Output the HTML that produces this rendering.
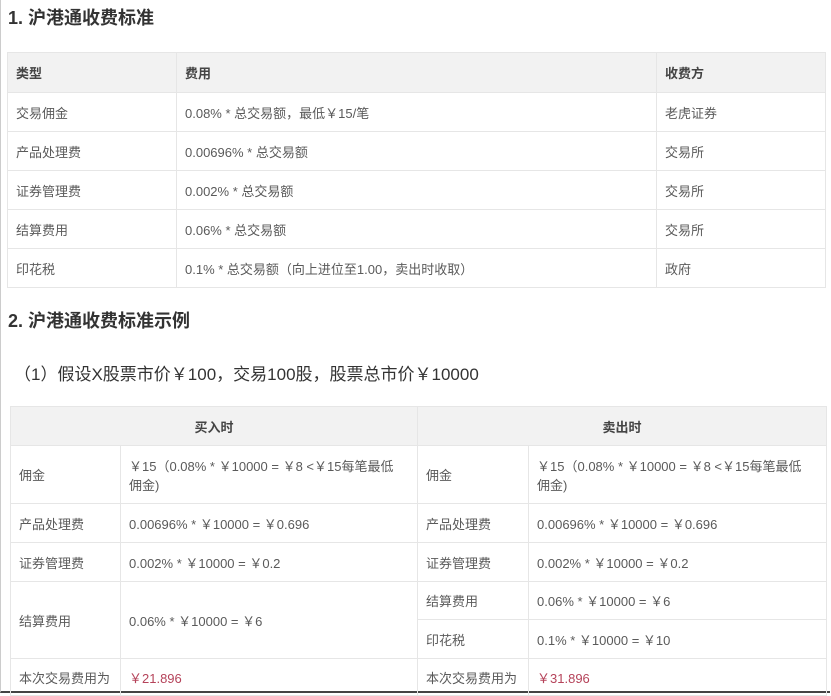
<!DOCTYPE html>
<html><head><meta charset="utf-8"><style>
body{margin:0;width:831px;height:694px;overflow:hidden;background:#fff;font-family:"Liberation Sans","Noto Sans CJK SC",sans-serif;color:#5a5a5a;position:relative}
.h{position:absolute;font-weight:bold;color:#333}
table{position:absolute;border-collapse:collapse;font-size:13px}
td{border:1px solid #e6e6e6;padding:0 8px;vertical-align:middle}
.t1 td{height:38px}
.hd td{background:#f2f2f2;font-weight:bold;color:#444}
.red{color:#b5435a}
.t2{table-layout:fixed}
</style></head><body>
<div style="position:absolute;left:0;top:0;width:830px;height:693px;border-left:1px solid #ccc;border-bottom:2px solid #444;box-sizing:border-box"></div>
<div class="h" style="left:8px;top:4px;font-size:18px">1. 沪港通收费标准</div>
<table class="t1" style="left:7px;top:52px;width:819px">
<tr class="hd"><td style="width:152px;height:39px">类型</td><td style="width:463px">费用</td><td>收费方</td></tr>
<tr><td>交易佣金</td><td>0.08% * 总交易额，最低￥15/笔</td><td>老虎证券</td></tr>
<tr><td>产品处理费</td><td>0.00696% * 总交易额</td><td>交易所</td></tr>
<tr><td>证券管理费</td><td>0.002% * 总交易额</td><td>交易所</td></tr>
<tr><td>结算费用</td><td>0.06% * 总交易额</td><td>交易所</td></tr>
<tr><td>印花税</td><td>0.1% * 总交易额（向上进位至1.00，卖出时收取）</td><td>政府</td></tr>
</table>
<div class="h" style="left:8px;top:307px;font-size:18px">2. 沪港通收费标准示例</div>
<div style="position:absolute;left:14px;top:360px;font-size:17px;color:#333">（1）假设X股票市价￥100，交易100股，股票总市价￥10000</div>
<table class="t2" style="left:10px;top:406px;width:816px">
<colgroup><col style="width:110px"><col style="width:297px"><col style="width:111px"><col style="width:298px"></colgroup>
<tr class="hd"><td colspan="2" style="text-align:center;height:38px">买入时</td><td colspan="2" style="text-align:center">卖出时</td></tr>
<tr><td style="height:57px">佣金</td><td style="padding-right:22px">￥15（0.08% * ￥10000 = ￥8 &lt;￥15每笔最低佣金)</td><td>佣金</td><td style="padding-right:22px">￥15（0.08% * ￥10000 = ￥8 &lt;￥15每笔最低佣金)</td></tr>
<tr><td style="height:38px">产品处理费</td><td>0.00696% * ￥10000 = ￥0.696</td><td>产品处理费</td><td>0.00696% * ￥10000 = ￥0.696</td></tr>
<tr><td style="height:38px">证券管理费</td><td>0.002% * ￥10000 = ￥0.2</td><td>证券管理费</td><td>0.002% * ￥10000 = ￥0.2</td></tr>
<tr><td rowspan="2">结算费用</td><td rowspan="2">0.06% * ￥10000 = ￥6</td><td style="height:37px">结算费用</td><td>0.06% * ￥10000 = ￥6</td></tr>
<tr><td style="height:38px">印花税</td><td>0.1% * ￥10000 = ￥10</td></tr>
<tr><td style="height:36px">本次交易费用为</td><td class="red">￥21.896</td><td>本次交易费用为</td><td class="red">￥31.896</td></tr>
</table>
</body></html>
